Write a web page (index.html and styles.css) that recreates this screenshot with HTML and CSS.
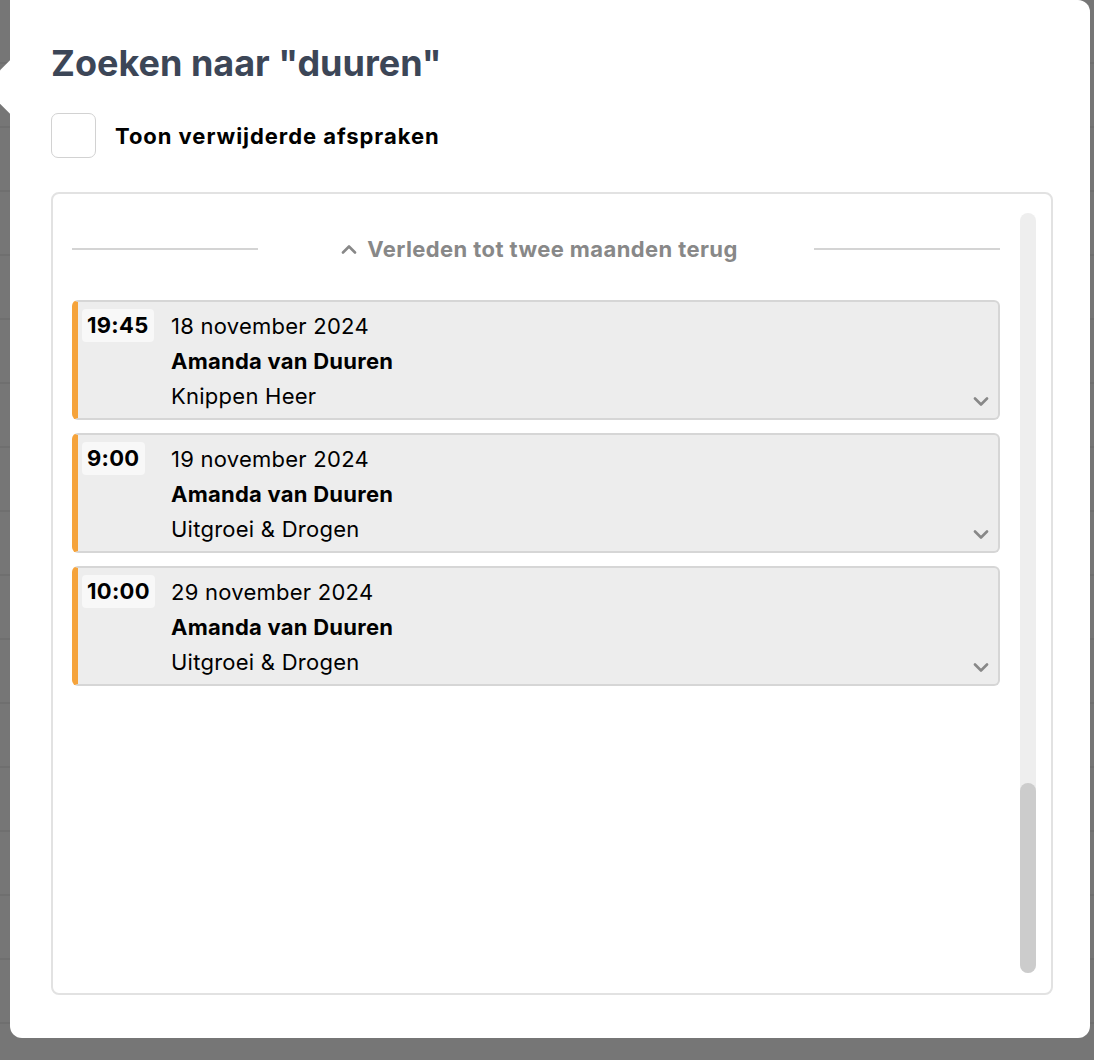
FILE: index.html
```html
<!DOCTYPE html>
<html lang="nl">
<head>
    <meta charset="UTF-8">
    <meta name="viewport" content="width=device-width, initial-scale=1.0">
    <title>Zoeken</title>
    <link rel="stylesheet" href="styles.css">
</head>
<body>
    <div class="popover">
        <h1 class="title">Zoeken naar "duuren"</h1>
        <label class="toggle">
            <span class="box"></span>
            Toon verwijderde afspraken
        </label>
        <div class="results">
            <div class="results-list">
                <div class="divider">
                    <span class="rule"></span>
                    <span class="divider-label">
                        <svg width="16" height="10" viewBox="0 0 16 10"><path d="M2 8.5 L8 2.5 L14 8.5" fill="none" stroke="#888" stroke-width="2.6" stroke-linecap="round" stroke-linejoin="round"/></svg>
                        Verleden tot twee maanden terug
                    </span>
                    <span class="rule"></span>
                </div>

                <div class="appt">
                    <div class="time-col"><span class="time">19:45</span></div>
                    <div class="details">
                        <div class="date">18 november 2024</div>
                        <div class="client">Amanda van Duuren</div>
                        <div class="service">Knippen Heer</div>
                    </div>
                    <svg class="expand" width="16" height="10" viewBox="0 0 16 10"><path d="M2 1.5 L8 7.5 L14 1.5" fill="none" stroke="#888" stroke-width="2.6" stroke-linecap="round" stroke-linejoin="round"/></svg>
                </div>

                <div class="appt">
                    <div class="time-col"><span class="time">9:00</span></div>
                    <div class="details">
                        <div class="date">19 november 2024</div>
                        <div class="client">Amanda van Duuren</div>
                        <div class="service">Uitgroei &amp; Drogen</div>
                    </div>
                    <svg class="expand" width="16" height="10" viewBox="0 0 16 10"><path d="M2 1.5 L8 7.5 L14 1.5" fill="none" stroke="#888" stroke-width="2.6" stroke-linecap="round" stroke-linejoin="round"/></svg>
                </div>

                <div class="appt">
                    <div class="time-col"><span class="time">10:00</span></div>
                    <div class="details">
                        <div class="date">29 november 2024</div>
                        <div class="client">Amanda van Duuren</div>
                        <div class="service">Uitgroei &amp; Drogen</div>
                    </div>
                    <svg class="expand" width="16" height="10" viewBox="0 0 16 10"><path d="M2 1.5 L8 7.5 L14 1.5" fill="none" stroke="#888" stroke-width="2.6" stroke-linecap="round" stroke-linejoin="round"/></svg>
                </div>
            </div>
            <div class="scrollbar"><div class="thumb"></div></div>
        </div>
    </div>
</body>
</html>
```

FILE: styles.css
```css
body {
    font-family: Inter, "Noto Sans", sans-serif;
    background-color: #767676;
    background-image: repeating-linear-gradient(to bottom, transparent 0, transparent 62px, #6f6f6f 62px, #6f6f6f 64px);
    margin: 0;
    height: 1060px;
    overflow: hidden;
    color: #000;
}
.popover {
    position: relative;
    margin-left: 10px;
    width: 1080px;
    height: 1038px;
    box-sizing: border-box;
    background: white;
    border-radius: 0 12px 12px 12px;
    padding: 41px 37px 43px 41px;
    display: flex;
    flex-direction: column;
}
.popover::before {
    content: "";
    position: absolute;
    left: -19px;
    top: 68px;
    width: 38px;
    height: 38px;
    background: white;
    transform: rotate(45deg);
}
.title {
    position: relative;
    margin: 0;
    font-size: 36px;
    line-height: 44px;
    font-weight: 700;
    color: #3c4657;
}
.toggle {
    display: flex;
    align-items: center;
    gap: 19px;
    margin-top: 28px;
    font-size: 22px;
    font-weight: 700;
    letter-spacing: 0.95px;
}
.box {
    width: 43px;
    height: 43px;
    border: 1.5px solid #d2d2d2;
    border-radius: 7px;
    background: white;
}
.results {
    display: flex;
    gap: 20px;
    margin-top: 34px;
    flex: 1;
    border: 2px solid #e2e2e2;
    border-radius: 8px;
    padding: 19px 15px 20px 19px;
}
.results-list {
    flex: 1;
    display: flex;
    flex-direction: column;
    gap: 13px;
}
.divider {
    display: flex;
    align-items: center;
    height: 33px;
    margin: 19px 0 22px;
}
.rule {
    flex: 0 0 186px;
    height: 2px;
    background: #d4d4d4;
}
.divider-label {
    flex: 1;
    display: flex;
    justify-content: center;
    align-items: center;
    gap: 10px;
    padding-left: 7px;
    font-size: 22px;
    font-weight: 700;
    letter-spacing: 0.4px;
    color: #888;
}
.appt {
    display: flex;
    height: 120px;
    box-sizing: border-box;
    background: #ededed;
    border: 2px solid #d6d6d6;
    border-left: 6px solid #f5a33b;
    border-radius: 6px;
    padding: 7px 9px 4px 4px;
}
.time-col {
    flex: 0 0 89px;
}
.time {
    display: inline-block;
    background: #f8f8f8;
    border-radius: 4px;
    padding: 0 5px;
    line-height: 33px;
    font-size: 22px;
    font-weight: 700;
    letter-spacing: 0.3px;
}
.details {
    flex: 1;
    font-size: 22px;
    line-height: 35px;
    letter-spacing: 0.25px;
}
.client {
    font-weight: 700;
}
.expand {
    align-self: flex-end;
    margin-bottom: 7px;
}
.scrollbar {
    flex: 0 0 16px;
    display: flex;
    flex-direction: column;
    justify-content: flex-end;
    background: #eeeeee;
    border-radius: 8px;
}
.thumb {
    height: 190px;
    background: #cccccc;
    border-radius: 8px;
}
```
